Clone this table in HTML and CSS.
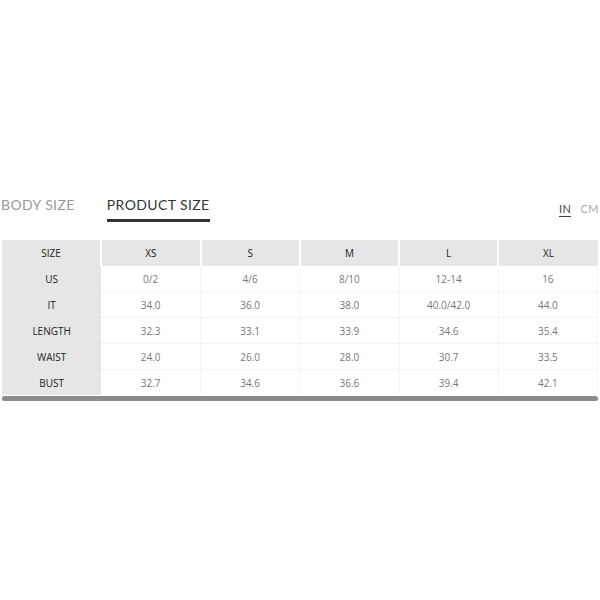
FILE: index.html
```html
<!DOCTYPE html>
<html>
<head>
<meta charset="utf-8">
<link rel="stylesheet" href="styles.css">
</head>
<body>
<div class="page">
  <div class="tabs">
    <div class="tab">BODY SIZE</div>
    <div class="tab active">PRODUCT SIZE</div>
    <div class="units">
      <span class="unit on">IN</span>
      <span class="unit">CM</span>
    </div>
  </div>
  <div class="scroller">
    <table class="chart">
      <thead>
        <tr><th>SIZE</th><th>XS</th><th>S</th><th>M</th><th>L</th><th>XL</th></tr>
      </thead>
      <tbody>
        <tr><th>US</th><td>0/2</td><td>4/6</td><td>8/10</td><td>12-14</td><td>16</td></tr>
        <tr><th>IT</th><td>34.0</td><td>36.0</td><td>38.0</td><td>40.0/42.0</td><td>44.0</td></tr>
        <tr><th>LENGTH</th><td>32.3</td><td>33.1</td><td>33.9</td><td>34.6</td><td>35.4</td></tr>
        <tr><th>WAIST</th><td>24.0</td><td>26.0</td><td>28.0</td><td>30.7</td><td>33.5</td></tr>
        <tr><th>BUST</th><td>32.7</td><td>34.6</td><td>36.6</td><td>39.4</td><td>42.1</td></tr>
      </tbody>
    </table>
    <div class="bar"></div>
  </div>
</div>
</body>
</html>
```

FILE: styles.css
```css
html, body {
  margin: 0;
  padding: 0;
  background: #fff;
}
.page {
  padding-top: 194px;
  font-family: Lato, "Open Sans", sans-serif;
}
.tabs {
  display: flex;
  align-items: flex-start;
  height: 46px;
}
.tab {
  font-size: 14px;
  letter-spacing: 0.4px;
  color: #999;
  padding: 2px 0 6px 1px;
  margin-right: 32px;
}
.tab.active {
  color: #333;
  border-bottom: 3px solid #333;
  padding-left: 0;
}
.units {
  margin-left: auto;
  display: flex;
  gap: 9px;
  padding: 8px 1px 0 0;
  font-size: 11px;
  letter-spacing: 0.5px;
}
.unit {
  color: #aaa;
  padding-bottom: 1px;
}
.unit.on {
  color: #444;
  border-bottom: 1px solid #444;
}
.scroller {
  padding: 0 2px 0 2px;
}
.chart {
  width: 100%;
  border-collapse: collapse;
  table-layout: fixed;
  font-family: "Open Sans", sans-serif;
  font-size: 10px;
}
.chart th, .chart td {
  height: 25px;
  padding: 0;
  text-align: center;
  font-weight: normal;
}
.chart thead th {
  height: 26px;
  background: #e6e6e6;
  color: #222;
  border-right: 2px solid #fff;
}
.chart thead th:last-child {
  border-right: none;
}
.chart tbody th {
  background: #e6e6e6;
  color: #222;
  border-bottom: 1px solid #e2e2e2;
}
.chart tbody td {
  color: #777;
  border-bottom: 1px solid #f4f4f4;
  border-right: 1px solid #f6f6f6;
}
.chart tbody tr:last-child th,
.chart tbody tr:last-child td {
  border-bottom: none;
}
.bar {
  height: 5px;
  margin-top: 1px;
  background: #8a8a8a;
  border-radius: 3px;
}
```
